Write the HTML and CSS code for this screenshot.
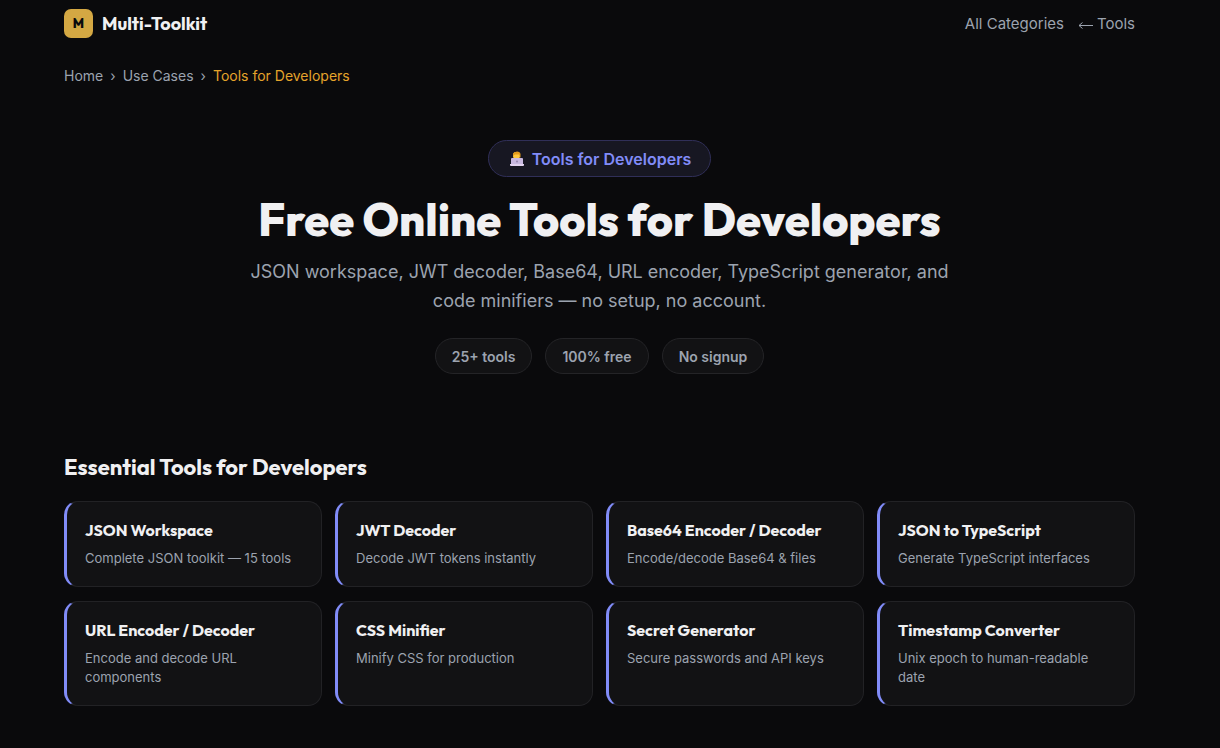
FILE: index.html
```html
<!DOCTYPE html>
<html lang="en">
<head>
<meta charset="utf-8">
<meta name="viewport" content="width=device-width, initial-scale=1">
<title>Free Online Tools for Developers</title>
<link rel="stylesheet" href="styles.css">
</head>
<body>
<div class="page">
  <header class="topbar">
    <a class="brand" href="#"><span class="brand-mark">M</span><span class="brand-name">Multi-Toolkit</span></a>
    <nav class="nav" aria-label="Main">
      <a href="#">All Categories</a>
      <a class="back" href="#"><svg class="arrow" viewBox="0 0 15 10" aria-hidden="true"><path d="M15 6.500H1M4.500 3.500 1 6.500l3.500 3" /></svg>Tools</a>
    </nav>
  </header>
  <nav class="crumbs" aria-label="Breadcrumb">
    <a href="#">Home</a><span>›</span><a href="#">Use Cases</a><span>›</span><span class="current">Tools for Developers</span>
  </nav>
  <main>
    <section class="hero">
      <div class="badge">
        <svg class="coder" viewBox="0 0 16 16" aria-hidden="true">
          <path fill="#3c8fb8" d="M3 10q0-3 5-3t5 3v4H3z"/>
          <rect x="4" y="1" width="7" height="7" rx="3" fill="#ffc83d"/>
          <path fill="#e39a1c" d="M4 5V3q1-2.500 4-2.500T11.500 3v4L10 3.500H6z"/>
          <path fill="#ffc83d" d="M5 4h5v3q-2.500 2-5 0z"/>
          <rect x="2" y="7" width="12" height="7" rx="1" fill="#c8b8df"/>
          <path fill="#e1d2ee" d="M1 13h14v1q0 1-1 1H2q-1 0-1-1z"/>
          <circle cx="8" cy="10.500" r="1" fill="#9687ad"/>
        </svg>
        <span>Tools for Developers</span>
      </div>
      <h1>Free Online Tools for Developers</h1>
      <p class="lede">JSON workspace, JWT decoder, Base64, URL encoder, TypeScript generator, and code minifiers — no setup, no account.</p>
      <ul class="stats"><li>25+ tools</li><li>100% free</li><li>No signup</li></ul>
    </section>
    <section>
      <h2>Essential Tools for Developers</h2>
      <div class="grid">
        <a class="card" href="#"><h3>JSON Workspace</h3><p>Complete JSON toolkit — 15 tools</p></a>
        <a class="card" href="#"><h3>JWT Decoder</h3><p>Decode JWT tokens instantly</p></a>
        <a class="card" href="#"><h3>Base64 Encoder / Decoder</h3><p>Encode/decode Base64 &amp; files</p></a>
        <a class="card" href="#"><h3>JSON to TypeScript</h3><p>Generate TypeScript interfaces</p></a>
        <a class="card" href="#"><h3>URL Encoder / Decoder</h3><p>Encode and decode URL components</p></a>
        <a class="card" href="#"><h3>CSS Minifier</h3><p>Minify CSS for production</p></a>
        <a class="card" href="#"><h3>Secret Generator</h3><p>Secure passwords and API keys</p></a>
        <a class="card" href="#"><h3>Timestamp Converter</h3><p>Unix epoch to human-readable date</p></a>
      </div>
    </section>
  </main>
</div>
</body>
</html>
```
FILE: styles.css
```css
* { box-sizing: border-box; margin: 0; padding: 0; }
body { background: #0a0a0c; color: #9ca3af; font-family: Inter, sans-serif; }
a { color: inherit; text-decoration: none; }
.page { padding: 0 85px 40px 64px; }
.topbar { display: flex; justify-content: space-between; align-items: center; height: 47px; }
.brand { display: flex; align-items: center; gap: 9px; }
.brand-mark { display: grid; place-items: center; width: 29px; height: 29px; border-radius: 7px; background: #d4a843; color: #0a0a0c; font: 800 13px/1 Outfit, Lato, sans-serif; }
.brand-name { color: #f0f0f2; font: 700 18px/24px Outfit, Lato, sans-serif; }
.nav { display: flex; gap: 14px; font-size: 15px; line-height: 24px; }
.back { display: flex; align-items: center; gap: 4px; }
.arrow { width: 15px; height: 10px; fill: none; stroke: currentColor; stroke-width: 1; }
.crumbs { display: flex; gap: 7px; margin-top: 18px; font-size: 14px; line-height: 22px; }
.crumbs .current { color: #e5a42b; }
.hero { display: flex; flex-direction: column; align-items: center; padding: 53px 0 79px; text-align: center; }
.badge { display: flex; align-items: center; gap: 7px; height: 37px; padding: 0 19px 0 20px; border: 1px solid #302f58; border-radius: 19px; background: #171722; color: #818cf8; font-size: 16px; font-weight: 600; }
.coder { width: 16px; height: 16px; }
h1 { margin-top: 17px; color: #f0f0f2; font: 800 45px/52px Outfit, Lato, sans-serif; }
.lede { max-width: 704px; margin-top: 11px; font-size: 18px; line-height: 29px; }
.stats { display: flex; gap: 13px; margin-top: 23px; list-style: none; }
.stats li { padding: 1px 16px 0; border: 1px solid #242427; border-radius: 18px; background: #121214; font-size: 14px; font-weight: 600; line-height: 33px; }
h2 { color: #f0f0f2; font: 700 22px/28px Outfit, Lato, sans-serif; }
.grid { display: grid; grid-template-columns: repeat(4, 1fr); gap: 14px 13px; margin-top: 20px; }
.card { padding: 17px 18px 18px; border: 1px solid #222225; border-left: 3px solid #818cf8; border-radius: 14px; background: #121214; }
.card h3 { color: #f0f0f2; font: 700 16px/22px Outfit, Lato, sans-serif; }
.card p { margin-top: 8px; font-size: 13px; line-height: 19px; }
```
